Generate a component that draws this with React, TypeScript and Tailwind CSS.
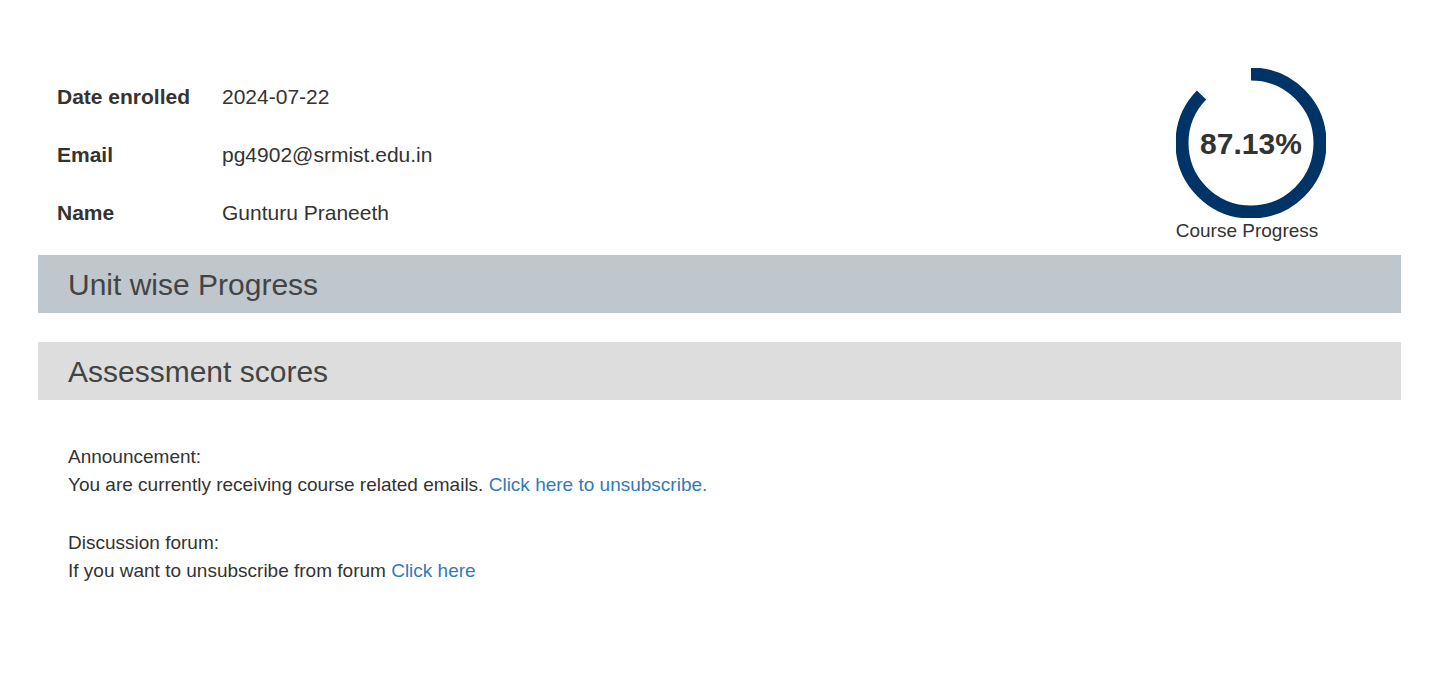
const PCT = 87.13;

function ProgressRing({ value }: { value: number }) {
  const r = 69;
  const c = 2 * Math.PI * r;
  return (
    <div className="flex flex-col items-center">
      <div className="relative w-[150px] h-[150px]">
        <svg width="150" height="150" viewBox="0 0 150 150">
          <circle
            cx="75"
            cy="75"
            r={r}
            fill="none"
            stroke="#003366"
            strokeWidth="13"
            strokeDasharray={`${(c * value) / 100} ${c}`}
            transform="rotate(-90 75 75)"
          />
        </svg>
        <div className="absolute inset-0 flex items-center justify-center text-[30px] font-bold text-[#333]">
          {value}%
        </div>
      </div>
      <div className="text-[19px] leading-[24px] text-[#333] mt-[1px] -ml-[8px]">Course Progress</div>
    </div>
  );
}

const details = [
  { label: 'Date enrolled', value: '2024-07-22' },
  { label: 'Email', value: 'pg4902@srmist.edu.in' },
  { label: 'Name', value: 'Gunturu Praneeth' },
];

export default function App() {
  return (
    <div className="min-h-screen bg-white pl-[38px] pr-[30px] pt-[68px] font-['Liberation_Sans',Arial,sans-serif] text-[#333]">
      <div className="flex justify-between pb-[12px]">
        <div className="pl-[19px]">
          {details.map((d) => (
            <div key={d.label} className="flex items-center h-[58px] text-[21px]">
              <span className="w-[165px] font-bold">{d.label}</span>
              <span>{d.value}</span>
            </div>
          ))}
        </div>
        <div className="mr-[75px]">
          <ProgressRing value={PCT} />
        </div>
      </div>

      <div className="h-[58px] bg-[#bfc6cc] flex items-center pl-[30px]">
        <h2 className="text-[30px] text-[#444]">Unit wise Progress</h2>
      </div>
      <div className="h-[58px] mt-[29px] bg-[#dddddd] flex items-center pl-[30px]">
        <h2 className="text-[30px] text-[#444]">Assessment scores</h2>
      </div>

      <div className="pl-[30px] pt-[43px] text-[19px] leading-[28px]">
        <div>Announcement:</div>
        <div>
          You are currently receiving course related emails.{' '}
          <a href="#" className="text-[#337ab7]">Click here to unsubscribe.</a>
        </div>
        <div className="h-[30px]" />
        <div>Discussion forum:</div>
        <div>
          If you want to unsubscribe from forum{' '}
          <a href="#" className="text-[#337ab7]">Click here</a>
        </div>
      </div>
    </div>
  );
}
